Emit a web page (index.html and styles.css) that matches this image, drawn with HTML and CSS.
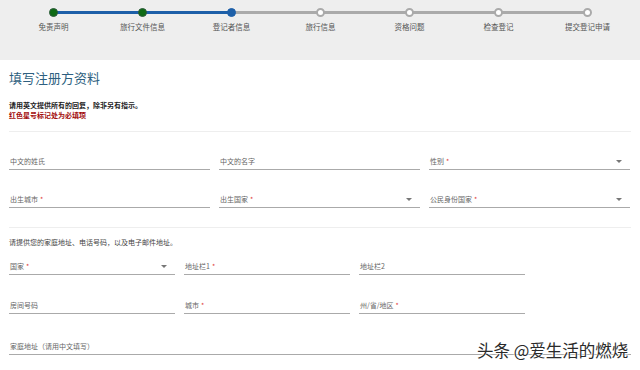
FILE: index.html
```html
<!DOCTYPE html>
<html>
<head>
  <meta charset="UTF-8">
  <title>填写注册方资料</title>
  <link rel="stylesheet" href="styles.css">
</head>
<body>
  <div class="band">
    <ol class="steps">
      <li class="step done"><span class="dot"></span><span class="step-label">免责声明</span></li>
      <li class="step done"><span class="dot"></span><span class="step-label">旅行文件信息</span></li>
      <li class="step current"><span class="dot"></span><span class="step-label">登记者信息</span></li>
      <li class="step"><span class="dot"></span><span class="step-label">旅行信息</span></li>
      <li class="step"><span class="dot"></span><span class="step-label">资格问题</span></li>
      <li class="step"><span class="dot"></span><span class="step-label">检查登记</span></li>
      <li class="step"><span class="dot"></span><span class="step-label">提交登记申请</span></li>
    </ol>
  </div>

  <div class="content">
    <h1 class="title">填写注册方资料</h1>
    <p class="intro">请用英文提供所有的回复，除非另有指示。</p>
    <p class="required-note">红色星号标记处为必填项</p>

    <div class="section">
      <div class="grid grid-3">
        <div class="field"><span class="label">中文的姓氏</span></div>
        <div class="field"><span class="label">中文的名字</span></div>
        <div class="field select"><span class="label">性别<i class="req">*</i></span><span class="arrow"></span></div>
        <div class="field"><span class="label">出生城市<i class="req">*</i></span></div>
        <div class="field select"><span class="label">出生国家<i class="req">*</i></span><span class="arrow"></span></div>
        <div class="field select"><span class="label">公民身份国家<i class="req">*</i></span><span class="arrow"></span></div>
      </div>
    </div>

    <div class="section address">
      <p class="hint">请提供您的家庭地址、电话号码，以及电子邮件地址。</p>
      <div class="grid grid-addr">
        <div class="field select"><span class="label">国家<i class="req">*</i></span><span class="arrow"></span></div>
        <div class="field"><span class="label">地址栏1<i class="req">*</i></span></div>
        <div class="field"><span class="label">地址栏2</span></div>
        <div class="field"><span class="label">房间号码</span></div>
        <div class="field"><span class="label">城市<i class="req">*</i></span></div>
        <div class="field"><span class="label">州/省/地区<i class="req">*</i></span></div>
      </div>
      <div class="field wide"><span class="label">家庭地址（请用中文填写）</span></div>
    </div>
  </div>

  <div class="watermark">头条 @爱生活的燃烧</div>
</body>
</html>
```

FILE: styles.css
```css
body {
  margin: 0;
  font-family: "Noto Sans CJK SC", "Noto Sans", sans-serif;
  background: #fff;
  color: #444;
  position: relative;
  height: 370px;
  overflow: hidden;
}

.band {
  background: #eeeeee;
  height: 60px;
}

.steps {
  list-style: none;
  margin: 0;
  padding: 8px 0 0 9px;
  display: flex;
}

.step {
  width: 89px;
  position: relative;
  display: flex;
  flex-direction: column;
  align-items: center;
}

.step::before,
.step::after {
  content: "";
  position: absolute;
  top: 3px;
  height: 3px;
  width: 50%;
  background: #aaaaaa;
}

.step::before {
  left: 0;
}

.step::after {
  right: 0;
}

.step:first-child::before,
.step:last-child::after {
  display: none;
}

.step.done::before,
.step.done::after,
.step.current::before {
  background: #1d5fa8;
}

.dot {
  position: relative;
  z-index: 1;
  width: 9px;
  height: 9px;
  border-radius: 50%;
  box-sizing: border-box;
  background: #fff;
  border: 2px solid #aaaaaa;
}

.step.done .dot {
  background: #0e6a14;
  border: 1px solid #2c5a3a;
}

.step.current .dot {
  background: #1d5fa8;
  border: 1px solid #1d5fa8;
}

.step-label {
  margin-top: 5px;
  font-size: 7.5px;
  line-height: 10px;
  color: #555;
  white-space: nowrap;
}

.content {
  padding: 0 9px;
  width: 622px;
}

.title {
  margin: 0;
  padding-top: 9px;
  font-size: 13px;
  font-weight: normal;
  line-height: 18px;
  color: #2e5f80;
}

.intro {
  margin: 13px 0 0;
  font-size: 7px;
  line-height: 10px;
  color: #222;
  font-weight: bold;
}

.required-note {
  margin: 0;
  font-size: 7px;
  line-height: 10px;
  color: #a30d0d;
  font-weight: bold;
}

.section {
  border-top: 1px solid #eeeeee;
  margin-top: 11px;
}

.section.address {
  margin-top: 19px;
}

.grid {
  display: grid;
  column-gap: 9px;
}

.grid-3 {
  grid-template-columns: repeat(3, 201px);
  padding-top: 24px;
  row-gap: 24px;
}

.grid-addr {
  grid-template-columns: repeat(3, 166px);
  row-gap: 25px;
}

.field {
  position: relative;
  border-bottom: 1px solid #aaaaaa;
  padding: 0 0 3px 1px;
  height: 10px;
}

.label {
  font-size: 7px;
  line-height: 10px;
  color: #666;
  display: block;
}

.req {
  font-style: normal;
  color: #e0403a;
  margin-left: 2px;
}

.arrow {
  position: absolute;
  right: 8px;
  top: 4px;
  width: 0;
  height: 0;
  border-left: 3px solid transparent;
  border-right: 3px solid transparent;
  border-top: 3px solid #777;
}

.hint {
  margin: 9px 0 14px;
  font-size: 7px;
  line-height: 10px;
  color: #444;
}

.field.wide {
  margin-top: 27px;
}

.watermark {
  position: absolute;
  left: 477px;
  top: 339px;
  font-size: 16.5px;
  line-height: 22px;
  color: #2a2a2a;
  text-shadow: 0 0 2px #fff, 0 0 2px #fff, 0 0 2px #fff;
  white-space: nowrap;
}
```
